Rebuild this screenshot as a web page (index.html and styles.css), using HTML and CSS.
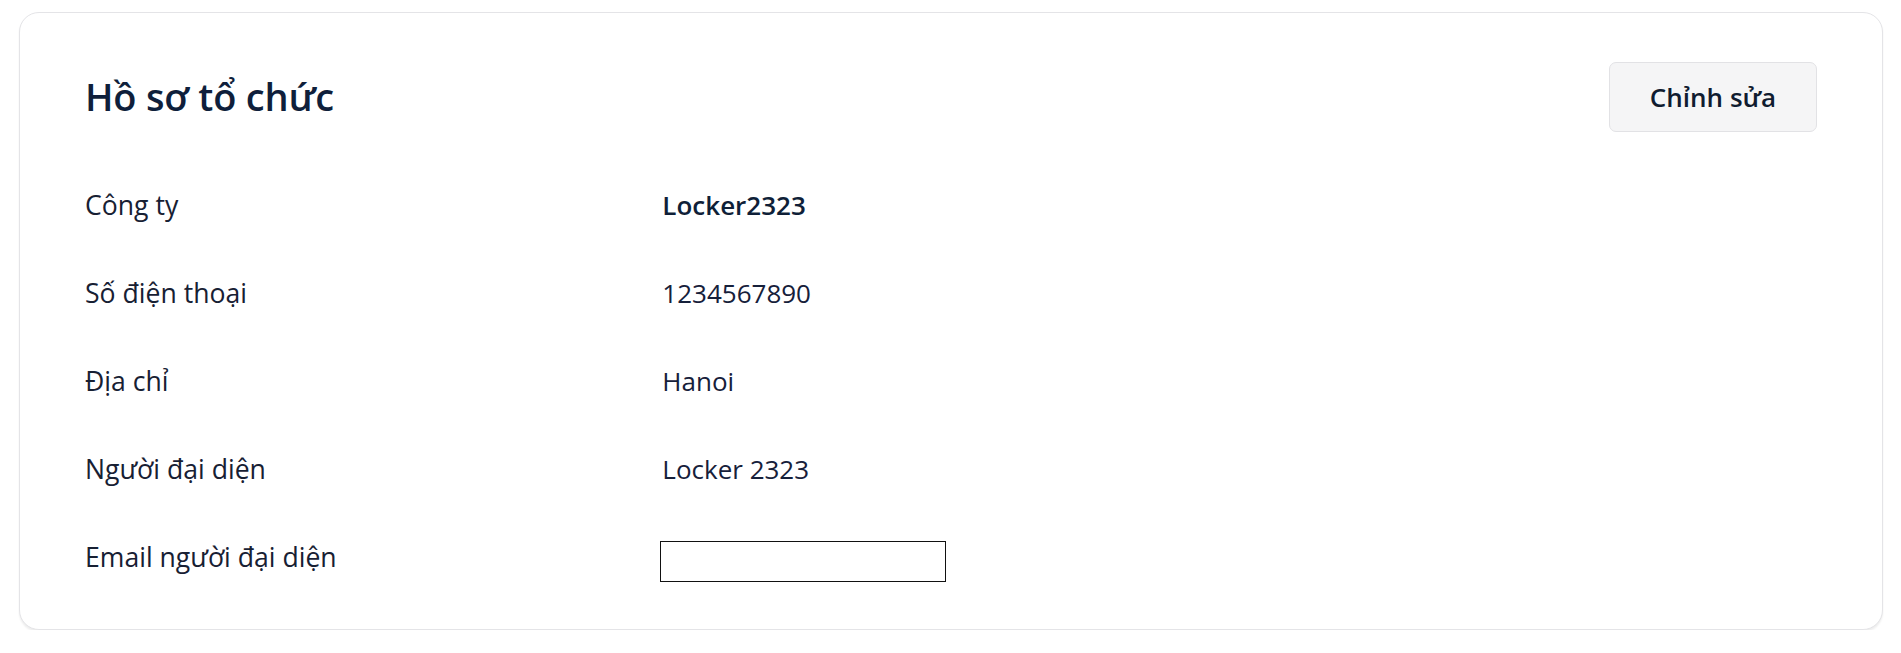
FILE: index.html
```html
<!DOCTYPE html>
<html lang="vi">
<head>
<meta charset="utf-8">
<title>Hồ sơ tổ chức</title>
<link rel="stylesheet" href="styles.css">
</head>
<body>
<div class="page">
  <section class="card">
    <header class="card-header">
      <h1 class="card-title">Hồ sơ tổ chức</h1>
      <button class="btn-edit" type="button">Chỉnh sửa</button>
    </header>
    <dl class="info">
      <dt class="info-label">Công ty</dt>
      <dd class="info-value info-value--strong">Locker2323</dd>
      <dt class="info-label">Số điện thoại</dt>
      <dd class="info-value">1234567890</dd>
      <dt class="info-label">Địa chỉ</dt>
      <dd class="info-value">Hanoi</dd>
      <dt class="info-label">Người đại diện</dt>
      <dd class="info-value">Locker 2323</dd>
      <dt class="info-label">Email người đại diện</dt>
      <dd class="info-value"><input class="info-input" type="text" aria-label="Email người đại diện"></dd>
    </dl>
  </section>
</div>
</body>
</html>
```
FILE: styles.css
```css
html, body {
  margin: 0;
  padding: 0;
  background: #ffffff;
}

body {
  font-family: "Open Sans", "Noto Sans", "DejaVu Sans", sans-serif;
  color: #1b2436;
}

.page {
  padding: 12px 18px 0 19px;
}

.card {
  border: 1px solid #e4e4e7;
  border-radius: 20px;
  box-shadow: 0 2px 2px rgba(0, 0, 0, 0.07);
  padding: 49px 65px 47px 65px;
  background: #fff;
}

.card-header {
  display: flex;
  align-items: center;
  justify-content: space-between;
  height: 70px;
}

.card-title {
  margin: 0;
  font-size: 38px;
  font-weight: 600;
  line-height: 1.2;
  color: #0f1f3b;
  letter-spacing: -0.2px;
}

.btn-edit {
  width: 208px;
  height: 70px;
  background: #f5f5f6;
  border: 1px solid #e2e2e5;
  border-radius: 7px;
  font-family: inherit;
  font-size: 26px;
  font-weight: 600;
  color: #101c30;
  cursor: pointer;
}

.info {
  display: grid;
  grid-template-columns: 1fr 2fr;
  row-gap: 48px;
  margin: 53px 0 0 0;
}

.info-label,
.info-value {
  margin: 0;
  font-size: 26px;
  line-height: 40px;
}

.info-label {
  color: #172033;
  font-size: 26.6px;
}

.info-value {
  color: #16203a;
}

.info-value--strong {
  font-weight: 600;
  color: #0f1f38;
}

.info-input {
  display: block;
  box-sizing: border-box;
  width: 286px;
  height: 41px;
  margin: 4px 0 0 -2px;
  border: 1px solid #111;
  border-radius: 0;
  background: #fff;
  padding: 0 6px;
  font-family: inherit;
  font-size: 20px;
}
```
